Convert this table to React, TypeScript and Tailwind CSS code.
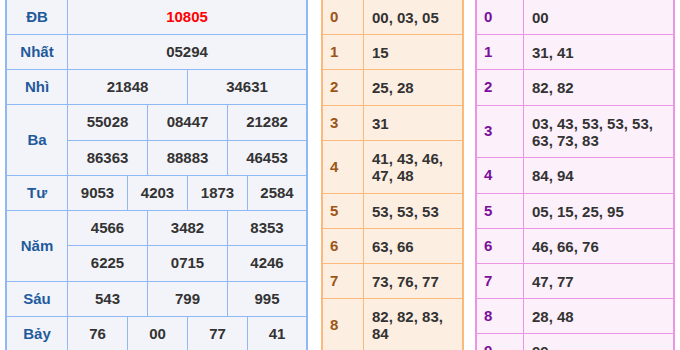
import React from "react";

const BLUE = "border-[#8fb9f4]";

type LRow = { label: string; lines: string[][]; heights: string[]; red?: boolean };

const leftRows: LRow[] = [
  { label: "ĐB", lines: [["10805"]], heights: ["h-[35px]"], red: true },
  { label: "Nhất", lines: [["05294"]], heights: ["h-[35px]"] },
  { label: "Nhì", lines: [["21848", "34631"]], heights: ["h-[35px]"] },
  {
    label: "Ba",
    lines: [
      ["55028", "08447", "21282"],
      ["86363", "88883", "46453"],
    ],
    heights: ["h-[36px]", "h-[35px]"],
  },
  { label: "Tư", lines: [["9053", "4203", "1873", "2584"]], heights: ["h-[35px]"] },
  {
    label: "Năm",
    lines: [
      ["4566", "3482", "8353"],
      ["6225", "0715", "4246"],
    ],
    heights: ["h-[35px]", "h-[36px]"],
  },
  { label: "Sáu", lines: [["543", "799", "995"]], heights: ["h-[35px]"] },
  { label: "Bảy", lines: [["76", "00", "77", "41"]], heights: ["h-[35px]"] },
];

function cellWidth(n: number, i: number): string {
  if (i === n - 1) return "flex-1";
  if (n === 2) return "w-[120px] border-r";
  if (n === 3) return "w-[80px] border-r";
  return "w-[60px] border-r";
}

function LeftTable() {
  return (
    <div className={`w-[303px] shrink-0 border-2 ${BLUE} bg-[#f3f4f9]`}>
      {leftRows.map((r) => (
        <div key={r.label} className="flex">
          <div
            className={`w-[61px] shrink-0 border-r border-b ${BLUE} flex items-center justify-center text-[#1f5a9c]`}
          >
            {r.label}
          </div>
          <div className="flex-1 flex flex-col">
            {r.lines.map((line, li) => (
              <div key={li} className={`flex border-b ${BLUE} ${r.heights[li]}`}>
                {line.map((v, i) => (
                  <div
                    key={i}
                    className={`${cellWidth(line.length, i)} ${BLUE} flex items-center justify-center ${
                      r.red ? "text-[#ff0000]" : "text-[#333333]"
                    }`}
                  >
                    {v}
                  </div>
                ))}
              </div>
            ))}
          </div>
        </div>
      ))}
    </div>
  );
}

type HRow = { d: string; v: string; h: string };

const orangeRows: HRow[] = [
  { d: "0", v: "00, 03, 05", h: "h-[35px]" },
  { d: "1", v: "15", h: "h-[35px]" },
  { d: "2", v: "25, 28", h: "h-[36px]" },
  { d: "3", v: "31", h: "h-[35px]" },
  { d: "4", v: "41, 43, 46, 47, 48", h: "h-[53px]" },
  { d: "5", v: "53, 53, 53", h: "h-[35px]" },
  { d: "6", v: "63, 66", h: "h-[35px]" },
  { d: "7", v: "73, 76, 77", h: "h-[35px]" },
  { d: "8", v: "82, 82, 83, 84", h: "h-[53px]" },
];

const pinkRows: HRow[] = [
  { d: "0", v: "00", h: "h-[35px]" },
  { d: "1", v: "31, 41", h: "h-[35px]" },
  { d: "2", v: "82, 82", h: "h-[36px]" },
  { d: "3", v: "03, 43, 53, 53, 53, 63, 73, 83", h: "h-[52px]" },
  { d: "4", v: "84, 94", h: "h-[36px]" },
  { d: "5", v: "05, 15, 25, 95", h: "h-[35px]" },
  { d: "6", v: "46, 66, 76", h: "h-[35px]" },
  { d: "7", v: "47, 77", h: "h-[35px]" },
  { d: "8", v: "28, 48", h: "h-[35px]" },
  { d: "9", v: "99", h: "h-[35px]" },
];

function OrangeTable() {
  return (
    <div className="w-[143px] shrink-0 border-2 border-[#fcb97c] bg-[#fdeee2]">
      {orangeRows.map((r) => (
        <div key={r.d} className={`flex border-b border-[#fcb97c] ${r.h}`}>
          <div className="w-[41px] shrink-0 border-r border-[#fcb97c] flex items-center pl-[7px] text-[#9c5516]">
            {r.d}
          </div>
          <div className="flex-1 flex items-center pl-[8px] pr-[8px] text-[#333333] leading-[17px]">
            {r.v}
          </div>
        </div>
      ))}
    </div>
  );
}

function PinkTable() {
  return (
    <div className="w-[200px] shrink-0 border-2 border-[#ec95e4] bg-[#fcf0fa]">
      {pinkRows.map((r) => (
        <div key={r.d} className={`flex border-b border-[#ec95e4] ${r.h}`}>
          <div className="w-[47px] shrink-0 border-r border-[#ec95e4] flex items-center pl-[7px] text-[#7a0f9a]">
            {r.d}
          </div>
          <div className="flex-1 flex items-center pl-[8px] pr-[12px] text-[#333333] leading-[17px]">
            {r.v}
          </div>
        </div>
      ))}
    </div>
  );
}

export default function App() {
  return (
    <div className="w-[680px] h-[350px] overflow-hidden bg-white font-['Liberation_Sans',Arial,sans-serif] font-bold text-[15px]">
      <div className="flex items-start pl-[5px] -mt-[2px]">
        <LeftTable />
        <div className="w-[13px] shrink-0" />
        <OrangeTable />
        <div className="w-[11px] shrink-0" />
        <PinkTable />
      </div>
    </div>
  );
}
